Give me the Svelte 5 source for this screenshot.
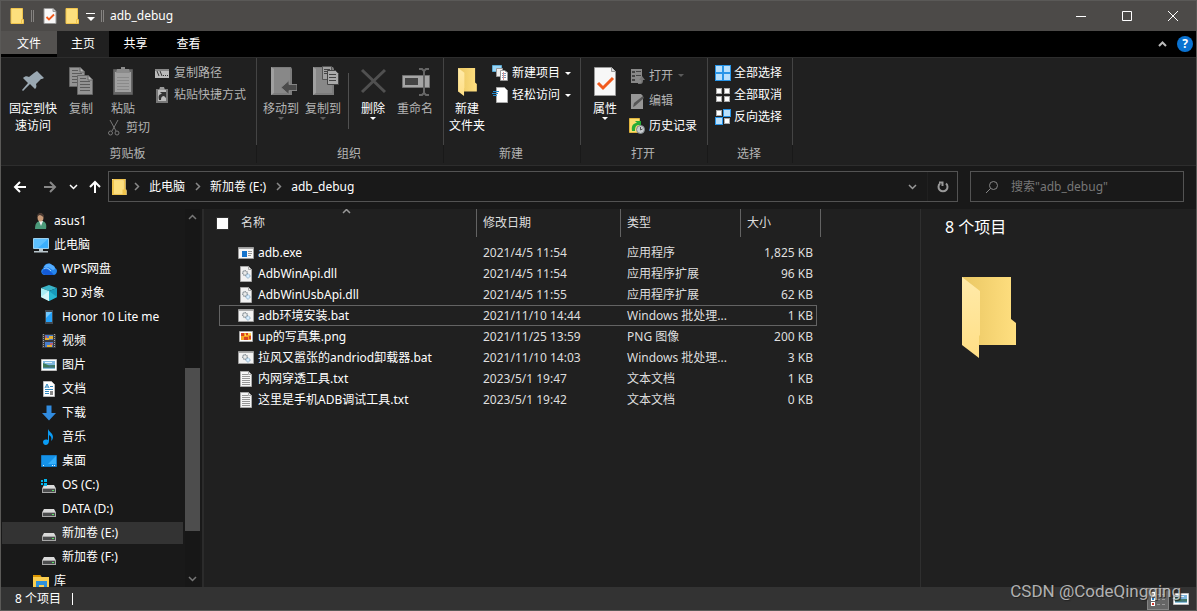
<script>
  let search = '';
  let allChecked = false;

  const tabs = ['主页', '共享', '查看'];
  const crumbs = ['此电脑', '新加卷 (E:)', 'adb_debug'];

  const tree = [
    { icon: 'user', label: 'asus1', root: true },
    { icon: 'pc', label: '此电脑', root: true },
    { icon: 'cloud', label: 'WPS网盘' },
    { icon: 'cube', label: '3D 对象' },
    { icon: 'phone', label: 'Honor 10 Lite me' },
    { icon: 'video', label: '视频' },
    { icon: 'picture', label: '图片' },
    { icon: 'doc', label: '文档' },
    { icon: 'download', label: '下载' },
    { icon: 'music', label: '音乐' },
    { icon: 'desktop', label: '桌面' },
    { icon: 'osdrive', label: 'OS (C:)' },
    { icon: 'drive', label: 'DATA (D:)' },
    { icon: 'drive', label: '新加卷 (E:)', current: true },
    { icon: 'drive', label: '新加卷 (F:)' },
    { icon: 'library', label: '库', root: true }
  ];

  const files = [
    { icon: 'exe', name: 'adb.exe', date: '2021/4/5 11:54', type: '应用程序', size: '1,825 KB' },
    { icon: 'dll', name: 'AdbWinApi.dll', date: '2021/4/5 11:54', type: '应用程序扩展', size: '96 KB' },
    { icon: 'dll', name: 'AdbWinUsbApi.dll', date: '2021/4/5 11:55', type: '应用程序扩展', size: '62 KB' },
    { icon: 'bat', name: 'adb环境安装.bat', date: '2021/11/10 14:44', type: 'Windows 批处理...', size: '1 KB', focused: true },
    { icon: 'png', name: 'up的写真集.png', date: '2021/11/25 13:59', type: 'PNG 图像', size: '200 KB' },
    { icon: 'bat', name: '拉风又嚣张的andriod卸载器.bat', date: '2021/11/10 14:03', type: 'Windows 批处理...', size: '3 KB' },
    { icon: 'txt', name: '内网穿透工具.txt', date: '2023/5/1 19:47', type: '文本文档', size: '1 KB' },
    { icon: 'txt', name: '这里是手机ADB调试工具.txt', date: '2023/5/1 19:42', type: '文本文档', size: '0 KB' }
  ];
</script>

{#snippet icon(name)}
  <svg class="icon" width="16" height="16" viewBox="0 0 16 16" aria-hidden="true">
    {#if name === 'folder'}
      <path d="M2 0.5h11.5v10.5l1 1v3.5H2z" fill="#fddf7d" />
      <path d="M2 0.5h11.5v10.5M12.5 15.5v-4h2v4H2V.5" fill="none" stroke="#f0c44c" />
    {:else if name === 'props'}
      <path d="M2 .5h9l3 3v12H2z" fill="#f8f8f8" stroke="#999" />
      <path d="M11 .5v3h3" fill="#ccc" stroke="#999" />
      <path d="M4.500 9l2.500 2.500 5-5" fill="none" stroke="#f05a1c" stroke-width="1.800" />
    {:else if name === 'user'}
      <path d="M2 16c0-5 1.500-8 6-8s6 3 5 8z" fill="#4b9a7a" />
      <path d="M6 8l2 5 2-5z" fill="#eee" />
      <ellipse cx="7.500" cy="4.500" rx="3" ry="4" fill="#c79a78" />
      <path d="M4 5c-1-7 8-6 7 0-1-2-4-3-4-3S5 2 4 5z" fill="#4a3a32" />
    {:else if name === 'pc'}
      <path d="M.5 1.500h15v10H.5z" fill="#3aaefc" stroke="#9bd0ef" />
      <path d="M1 2h14L5 11H1z" fill="#74cbff" opacity=".6" />
      <path d="M6 12h4v2H6zM1 14h14v1.500H1z" fill="#b9c6cc" />
    {:else if name === 'cloud'}
      <path d="M3 14a3.500 3.500 0 0 1-1-6.500C3 3 8 1 11 4c2 .5 3 2 3 3 3 1 2.500 6-1 7z" fill="#2586ed" />
      <path d="M3 6c2-4 6-4 8-2 2 1 3 2 3 4l-2 1-5-3z" fill="#54adff" />
      <path d="M1 12c1-5 5-6 12 2H4z" fill="#145bd7" />
      <path d="M3 8c2-2 4-1 7 2" fill="none" stroke="#bfe0ff" stroke-width=".8" />
    {:else if name === 'cube'}
      <path d="M8 0l8 3-8 3-8-3z" fill="#3ab5c9" />
      <path d="M0 3l8 3v10l-8-4z" fill="#a8eef4" />
      <path d="M16 3L8 6v10l8-4z" fill="#169bbb" />
      <path d="M0 12l8-6v10z" fill="#d5f7f8" /><path d="M8 6l8 6-8 4z" fill="#29b8d1" />
    {:else if name === 'phone'}
      <path d="M4 1h8v14H4z" fill="#414951" /><path d="M5 3h6v10H5z" fill="#25a2fa" />
      <path d="M5 3h6L5 9z" fill="#71c9ff" />
    {:else if name === 'video'}
      <path d="M1 1h14v14H1z" fill="#39393c" />
      <path d="M2.500 1v14M13.500 1v14" stroke="#a0a0a0" stroke-dasharray="1 1" />
      <path d="M4 2h8v5H4zM4 9h8v5H4z" fill="#477ccc" />
      <path d="M4 5h4v2H4zM8 3h4v3H8zM6 12h5v2H6z" fill="#e2af35" />
      <path d="M4 3h2v2H4zM9 10h3v2H9z" fill="#bb6077" />
    {:else if name === 'picture'}
      <path d="M.5 2.500h15v11H.5z" fill="#fff" stroke="#bbb" />
      <path d="M2 4h12v4H2z" fill="#7fb7df" /><path d="M2 8h12v4H2z" fill="#477b88" />
      <path d="M4 5h7v1H4z" fill="#e7f4fb" />
      <path d="M2 6l5 2 2 2H2zM8 9l6-1v2z" fill="#3e7b59" /><path d="M2 11h12v1H2z" fill="#8ec3dc" />
    {:else if name === 'doc'}
      <path d="M2.500.5h8l3 3v12h-11z" fill="#fff" stroke="#bbb" />
      <path d="M4 7l2-4 2 4M5 6h2M9 5.500h3M4 8.500h8M4 10.500h4M4 12.500h4" fill="none" stroke="#2f87bf" />
      <path d="M9 10h3v4H9z" fill="#888" />
    {:else if name === 'download'}
      <path d="M5.500.5h5V8h4.500l-7 7.500L1 8h4.500z" fill="#318ce0" />
    {:else if name === 'music'}
      <path d="M7 0c1 3 5 4 5 8 0 2-1 3-2 4 1-3 0-5-2-6v6c0 5-6 5-6 1 0-2 2-3 5-2z" fill="#0a9cf5" />
    {:else if name === 'desktop'}
      <path d="M.5 2.500h15v11H.5z" fill="#1592e8" stroke="#137bc6" />
      <path d="M15 3v8H7z" fill="#36b0fb" /><path d="M2 12.500h1M11 12.500h1M13 12.500h1" stroke="#e5f6ff" />
    {:else if name === 'osdrive' || name === 'drive'}
      <path d="M3 8h10l2 3.500H1z" fill="#dadada" />
      <path d="M1 11h14v5H1z" fill="#a7a7a7" /><path d="M2 12h12v3H2z" fill="#4b4c4d" />
      <path d="M11 13h2v1h-2z" fill="#56e363" />
      {#if name === 'osdrive'}
        <path d="M0 3h2v2H0zM3 2h3v3H3zM0 6h2v2H0zM3 6h3v3H3z" fill="#00b5ed" />
      {/if}
    {:else if name === 'library'}
      <path d="M0 2h7l1.500 2H16v12H0z" fill="#fbcf50" /><path d="M0 2h7l1.500 2H0z" fill="#da9400" />
      <path d="M3 8h11v8h-3v-4H6v4H3z" fill="#2e91db" />
    {:else if name === 'exe'}
      <path d="M.5 2.500h15v11H.5z" fill="#f7f7f7" stroke="#9b9b9b" /><path d="M1 3h14v1H1z" fill="#aaa" />
      <path d="M4 6h5v6H4z" fill="#1674cd" /><path d="M10 6.500h4M10 8.500h4M10 10.500h3" stroke="#999" />
    {:else if name === 'dll' || name === 'bat'}
      {#if name === 'dll'}
        <path d="M2.500.5h8l3 3v12h-11z" fill="#f2f2f2" stroke="#a8a8a8" /><path d="M10.500.5v3h3" fill="none" stroke="#a8a8a8" />
      {:else}
        <path d="M.5 1.500h15v12H.5z" fill="#f2f2f2" stroke="#9d9d9d" /><path d="M1 2h14v1H1z" fill="#aaa" />
      {/if}
      <circle cx="7" cy="7" r="2.500" fill="#c9cdcf" stroke="#778087" stroke-dasharray="1.500 .7" /><circle cx="7" cy="7" r="1" fill="#f5f5f5" />
      <circle cx="10" cy="10" r="2" fill="#d6edff" stroke="#82a5be" stroke-dasharray="1 .5" />
    {:else if name === 'png'}
      <path d="M1.500 2.500h13v10h-13z" fill="#fff" stroke="#aaa" />
      <path d="M3 4h10v7H3z" fill="#f6a423" /><path d="M3 4h3v3H3zM8 4h2v2H8zM6 8h4v3H6zM11 7h2v3h-2z" fill="#d64221" />
      <path d="M7 5h1v2H7zM10 4h3v2h-3z" fill="#ffd557" />
    {:else if name === 'txt'}
      <path d="M2.500.5h8l3 3v12h-11z" fill="#f6f6f6" stroke="#aaa" /><path d="M10.500.5v3h3" fill="none" stroke="#aaa" />
      <path d="M4 3.500h6M4 5.500h8M4 7.500h8M4 9.500h8M4 11.500h8M4 13.500h8" stroke="#969696" />
    {:else if name === 'copypath'}
      <path d="M1 4h14v9H1z" fill="#bbb" /><path d="M1 4h14v2H1z" fill="#888" />
      <path d="M3 6l2 5M6 6l2 5M9 10.500h1M11 10.500h1M13 10.500h1" stroke="#333" />
    {:else if name === 'shortcut'}
      <path d="M2 2h12v14H2z" fill="#777" /><path d="M4 3h8v11H4z" fill="#bcbcbc" />
      <path d="M6 0h4l1 3H5z" fill="#999" /><path d="M5 13c-1-4 0-6 3-6L6 5h6v6l-2-2c-2 0-3 1-3 4z" fill="#333" />
    {:else if name === 'cut'}
      <path d="M4 0l6 11M12 0L6 11" stroke="#777" /><circle cx="4.500" cy="13" r="2" fill="none" stroke="#777" /><circle cx="11" cy="13" r="2" fill="none" stroke="#777" />
    {:else if name === 'newitem'}
      <path d="M.5.5h9v6h-9z" fill="#9ad6f7" stroke="#5ca9d2" />
      <path d="M4.500 3.500h6v8h-6z" fill="#eee" stroke="#999" /><path d="M8.500 5.500h4l3 2v8h-7z" fill="#fff" stroke="#999" />
      <path d="M10 8.500h4M10 10.500h4M10 12.500h4" stroke="#819dba" /><path d="M11.500 7v8" stroke="#d99" />
    {:else if name === 'easy'}
      <path d="M4.500.5h8l3 3v12h-11z" fill="#fff" stroke="#aaa" /><path d="M1 4.500h6M0 6.500h6M1 8.500h4" stroke="#2489cd" />
    {:else if name === 'open'}
      <path d="M2 1h11v14H2z" fill="#888" /><path d="M3 3h3v2H3zM3 7h3v2H3zM3 11h3v2H3z" fill="#444" />
      <path d="M7 3.500h5M7 7.500h5" stroke="#444" /><path d="M9 15h2c2 0 1-3 1-3h-2l3-4 3 4h-2c0 3-1 4-3 4H9z" fill="#777" />
    {:else if name === 'edit'}
      <path d="M2 1h10l2 2v13H2z" fill="#969696" /><path d="M4 14l1-4 9-7 1 2-9 8z" fill="#555" />
    {:else if name === 'history'}
      <path d="M.5.500h10v14H.5z" fill="#f9dd6d" stroke="#dfb33d" />
      <path d="M3 13C2 7 5 5 8 5l-2-2h6v5L10 7c-3 0-4 2-4 6z" fill="#27ac38" />
      <circle cx="11.500" cy="11.500" r="4" fill="#c8ccd0" stroke="#7d8488" /><path d="M11.500 9v3l2-1" fill="none" stroke="#555" />
    {:else if name === 'selall' || name === 'selnone' || name === 'selinv'}
      {#each [[0, 0], [8, 0], [0, 8], [8, 8]] as [x, y], i}
        {#if name === 'selall' || (name === 'selinv' && (i === 1 || i === 2))}
          <rect x={x + 0.5} y={y + 0.5} width="7" height="7" fill="#b9e0fc" stroke="#2995e8" />
        {:else}
          <rect x={x + 1.5} y={y + 1.5} width="5" height="5" fill="#fff" stroke="#aaa" />
        {/if}
      {/each}
    {/if}
  </svg>
{/snippet}

{#snippet bigIcon(name)}
  <svg class="icon" width="32" height="32" viewBox="0 0 32 32" aria-hidden="true">
    {#if name === 'pin'}
      <path d="M20 5l7 7-2 1-1 0-5 5c1 3 0 4-1 5l-5-5-7 7-1-1 6-7-5-5c2-2 4-2 6-1l5-4z" fill="#9aa8b2" />
    {:else if name === 'copy'}
      {#each [[4, 1], [12, 9]] as [x, y]}
        <g transform="translate({x} {y})">
          <path d="M.5.500h11l4 4v15H.5z" fill="#949494" stroke="#666" /><path d="M11 1v4h4" fill="#bbb" stroke="#666" />
          <path d="M3 6.500h10M3 9.500h10M3 12.500h10M3 15.500h10M3 3.500h6" stroke="#5c5c5c" />
        </g>
      {/each}
    {:else if name === 'paste'}
      <path d="M6.500 3.500h19v25h-19z" fill="#666" stroke="#555" /><path d="M8 6h16v20H8z" fill="#a0a0a0" />
      <path d="M14 1h4v2h4l1 4H9l1-4h4z" fill="#8b8b8b" /><path d="M10 11.500h12M10 14.500h12M10 17.500h12M10 20.500h12M10 23.500h12" stroke="#8a8a8a" />
    {:else if name === 'move' || name === 'copyto'}
      <path d="M6 1h20l1 2v26H6z" fill="#7c7c7c" /><path d="M8 2h17v25H8z" fill="#888" /><path d="M6 1l3 2v24l-3 2z" fill="#a0a0a0" />
      {#if name === 'move'}
        <path d="M16 21.500l8-7v4h8v6h-8v4z" fill="#4b4b4b" stroke="#858585" />
      {:else}
        <path d="M15.500.5h9v13h-9z" fill="#a0a0a0" stroke="#555" /><path d="M20.500 4.500h8l3 3v11h-11z" fill="#aaa" stroke="#444" />
        <path d="M17 3.500h6M17 5.500h3M17 7.500h3M22 8.500h7M22 11.500h7M22 14.500h7" stroke="#444" />
      {/if}
    {:else if name === 'delete'}
      <path d="M5 4l23 22M28 4L5 26" stroke="#505050" stroke-width="3" />
    {:else if name === 'rename'}
      <path d="M3.500 9.500h27v12h-27z" fill="#a5a5a5" stroke="#717171" /><path d="M6 12h13v7H6z" fill="#444" />
      <path d="M20 3h3l2 2 2-2h3M25 5v22M20 29h3l2-2 2 2h3" fill="none" stroke="#666" stroke-width="2" />
    {:else if name === 'props'}
      <path d="M5.500 1.500h17l4 4v24h-21z" fill="#f7f7f7" stroke="#999" /><path d="M22.500 1.500v4h4" fill="#ddd" stroke="#999" />
      <path d="M9 17l5 5 10-10" fill="none" stroke="#f15a1d" stroke-width="3" />
    {/if}
  </svg>
{/snippet}

{#snippet folder(size)}
  <svg class="folder {size}" viewBox="0 0 54 81" aria-hidden="true">
    <defs>
      <linearGradient id="back-{size}" x1="0" y1="0" x2="1" y2="0">
        <stop offset="0" stop-color="#eac763" /><stop offset="1" stop-color="#ffdf80" />
      </linearGradient>
      <linearGradient id="flap-{size}" x1="0" y1="0" x2="0" y2="1">
        <stop offset="0" stop-color="#ffeaa9" /><stop offset="1" stop-color="#ffdf86" />
      </linearGradient>
    </defs>
    <path d="M0 0h49v42l5 4v22H0z" fill="url(#back-{size})" />
    <path d="M0 0l18 14v44l-1 1v22L0 68z" fill="url(#flap-{size})" />
  </svg>
{/snippet}

{#snippet chevron(dir)}
  <svg class="chevron {dir}" width="9" height="9" viewBox="0 0 9 9" aria-hidden="true">
    <path d="M1 3l3.500 3.500L8 3" fill="none" stroke="currentColor" stroke-width="1.500" />
  </svg>
{/snippet}

{#snippet big(name, label, state, arrow)}
  <button class="big {state}">
    {#if name === 'folder'}
      {@render folder('medium')}
    {:else}
      {@render bigIcon(name)}
    {/if}
    <span>{label}</span>
    {#if arrow}<i class="caret"></i>{/if}
  </button>
{/snippet}

{#snippet small(name, label, state, arrow)}
  <button class="small {state}">
    {@render icon(name)}
    <span>{label}</span>
    {#if arrow}<i class="caret"></i>{/if}
  </button>
{/snippet}

<div class="window">
  <header class="titlebar">
    {@render icon('folder')}
    <i class="grip"></i>
    <button class="quick" aria-label="属性">{@render icon('props')}</button>
    <button class="quick" aria-label="新建文件夹">{@render icon('folder')}</button>
    <button class="more" aria-label="自定义"><i class="caret"></i></button>
    <i class="grip"></i>
    <span class="title">adb_debug</span>
    <div class="controls">
      <button aria-label="最小化"><svg width="12" height="12"><path d="M1 6.500h10" /></svg></button>
      <button aria-label="最大化"><svg width="12" height="12"><path d="M1.500 1.500h9v9h-9z" /></svg></button>
      <button aria-label="关闭"><svg width="12" height="12"><path d="M1 1l10 10M11 1L1 11" /></svg></button>
    </div>
  </header>

  <nav class="tabs">
    <button class="file">文件</button>
    {#each tabs as tab, i}
      <button class:active={i === 0}>{tab}</button>
    {/each}
    <div class="tab-tools">
      <button class="fold" aria-label="折叠">{@render chevron('up')}</button>
      <button class="help" aria-label="帮助">?</button>
    </div>
  </nav>

  <section class="ribbon">
    <div class="group clipboard">
      <div class="tools">
        {@render big('pin', '固定到快速访问', 'wide', false)}
        {@render big('copy', '复制', 'dim', false)}
        <div class="paste">
          {@render big('paste', '粘贴', 'dim', false)}
          {@render small('cut', '剪切', 'dim', false)}
        </div>
        <div class="stack">
          {@render small('copypath', '复制路径', 'dim', false)}
          {@render small('shortcut', '粘贴快捷方式', 'dim', false)}
        </div>
      </div>
      <div class="caption">剪贴板</div>
    </div>
    <div class="group organize">
      <div class="tools">
        {@render big('move', '移动到', 'dim', true)}
        {@render big('copyto', '复制到', 'dim', true)}
        <i class="rule"></i>
        {@render big('delete', '删除', '', true)}
        {@render big('rename', '重命名', 'dim', false)}
      </div>
      <div class="caption">组织</div>
    </div>
    <div class="group create">
      <div class="tools">
        {@render big('folder', '新建 文件夹', '', false)}
        <div class="stack">
          {@render small('newitem', '新建项目', '', true)}
          {@render small('easy', '轻松访问', '', true)}
        </div>
      </div>
      <div class="caption">新建</div>
    </div>
    <div class="group open">
      <div class="tools">
        {@render big('props', '属性', '', true)}
        <div class="stack loose">
          {@render small('open', '打开', 'dim', true)}
          {@render small('edit', '编辑', 'dim', false)}
          {@render small('history', '历史记录', '', false)}
        </div>
      </div>
      <div class="caption">打开</div>
    </div>
    <div class="group select">
      <div class="tools">
        <div class="stack">
          {@render small('selall', '全部选择', '', false)}
          {@render small('selnone', '全部取消', '', false)}
          {@render small('selinv', '反向选择', '', false)}
        </div>
      </div>
      <div class="caption">选择</div>
    </div>
  </section>

  <div class="navbar">
    <div class="history">
      <button aria-label="后退"><svg width="14" height="14"><path d="M13 7H2M7 2L2 7l5 5" /></svg></button>
      <button class="off" aria-label="前进"><svg width="14" height="14"><path d="M1 7h11M7 2l5 5-5 5" /></svg></button>
      <button class="recent" aria-label="最近">{@render chevron('down')}</button>
      <button class="parent" aria-label="上移"><svg width="14" height="14"><path d="M7 13V2M2 7l5-5 5 5" /></svg></button>
    </div>
    <div class="address">
      {@render icon('folder')}
      {#each crumbs as crumb}
        <span class="sep">{@render chevron('right')}</span>
        <button class="crumb">{crumb}</button>
      {/each}
      <button class="drop" aria-label="展开">{@render chevron('down')}</button>
      <button class="refresh" aria-label="刷新">
        <svg width="12" height="12"><path d="M3 2.500a4.500 4.500 0 1 0 6 0M2 1.500h3.500V5" /></svg>
      </button>
    </div>
    <label class="search">
      <svg width="14" height="14" aria-hidden="true"><circle cx="8.500" cy="5.500" r="4" /><path d="M5.500 8.500L1 13" /></svg>
      <input type="text" aria-label="搜索" placeholder={'搜索"adb_debug"'} bind:value={search} />
    </label>
  </div>

  <main>
    <aside class="sidebar">
      <nav class="tree">
        {#each tree as item}
          <a href="#tree" class:root={item.root} class:current={item.current}>
            {@render icon(item.icon)}
            <span>{item.label}</span>
          </a>
        {/each}
      </nav>
      <div class="scrollbar">
        <button aria-label="向上滚动">{@render chevron('up')}</button>
        <i class="before"></i>
        <i class="thumb"></i>
        <i class="after"></i>
        <button aria-label="向下滚动">{@render chevron('down')}</button>
      </div>
    </aside>

    <section class="files">
      <table>
        <colgroup>
          <col class="c-name" /><col class="c-date" /><col class="c-type" /><col class="c-size" /><col class="c-end" />
        </colgroup>
        <thead>
          <tr>
            <th>
              <div class="head name">
                <input type="checkbox" aria-label="全选" bind:checked={allChecked} />
                名称
                <span class="sort">{@render chevron('up')}</span>
              </div>
            </th>
            <th><div class="head">修改日期</div></th>
            <th><div class="head">类型</div></th>
            <th colspan="2"><div class="head">大小</div></th>
          </tr>
        </thead>
        <tbody>
          {#each files as file}
            <tr class:focused={file.focused}>
              <td><div class="filename">{@render icon(file.icon)}<span>{file.name}</span></div></td>
              <td>{file.date}</td>
              <td>{file.type}</td>
              <td class="size">{file.size}</td>
              <td class="end"></td>
            </tr>
          {/each}
        </tbody>
      </table>
    </section>

    <aside class="preview">
      <h2>8 个项目</h2>
      {@render folder('large')}
    </aside>
  </main>

  <footer>
    <span class="count">8 个项目</span>
    <button class="view on" aria-label="详细信息">
      <svg width="16" height="16">
        <path d="M1 1h4v4H1zM1 6h4v4H1zM1 11h4v4H1z" fill="#fff" />
        <path d="M2 3h2" stroke="#555" /><path d="M2 8h2" stroke="#277fcd" stroke-width="2" /><path d="M2 13h2" stroke="#d43b30" stroke-width="2" />
        <path d="M7 3.500h3M12 3.500h3M7 8.500h3M12 8.500h3M7 13.500h3M12 13.500h3" stroke="#999" />
      </svg>
    </button>
    <button class="view" aria-label="大图标">{@render icon('picture')}</button>
  </footer>
  <div class="watermark">CSDN @CodeQingqing</div>
</div>

<style>
  :global(body) {
    background: #191919;
  }

  .window {
    position: relative;
    box-sizing: border-box;
    height: 100vh;
    display: flex;
    flex-direction: column;
    border: 1px solid #5a5957;
    background: #191919;
    color: #fff;
    font: 12px/18px "Noto Sans", "Noto Sans CJK SC", sans-serif;
  }

  button {
    padding: 0;
    border: 0;
    background: none;
    color: inherit;
    font: inherit;
  }

  svg {
    display: block;
    flex: none;
  }

  .up {
    transform: rotate(180deg);
  }

  .right {
    transform: rotate(-90deg);
  }

  .caret {
    width: 0;
    border: 3px solid transparent;
    border-top-color: currentColor;
    border-bottom: 0;
  }

  /* title bar */
  .titlebar {
    flex: none;
    display: flex;
    align-items: center;
    height: 30px;
    padding-left: 8px;
    background: #4c4a48;
  }

  .grip {
    width: 1px;
    height: 12px;
    margin: 0 6px;
    border: solid #858381;
    border-width: 0 1px;
  }

  .quick {
    margin-left: 2px;
  }

  .quick + .quick {
    margin-left: 6px;
  }

  .more {
    width: 9px;
    height: 8px;
    margin: 2px 0 0 6px;
    display: flex;
    justify-content: center;
    align-items: flex-end;
    border-top: 1px solid #fff;
  }

  .more .caret {
    border-width: 4px 4px 0;
  }

  .controls {
    display: flex;
    align-self: stretch;
    margin-left: auto;
  }

  .controls button {
    width: 46px;
    display: grid;
    place-items: center;
  }

  .controls path {
    fill: none;
    stroke: #fff;
  }

  /* ribbon tabs */
  .tabs {
    flex: none;
    display: flex;
    height: 26px;
    background: #000;
  }

  .tabs > button {
    width: 53px;
    height: 26px;
    line-height: 26px;
  }

  .tabs .file {
    width: 56px;
    height: 23px;
    line-height: 25px;
    background: #545250;
  }

  .tabs .active {
    width: 52px;
    background: #202020;
  }

  .tab-tools {
    margin-left: auto;
    display: flex;
    align-items: center;
    gap: 10px;
    padding-right: 3px;
    color: #bbb;
  }

  .fold path {
    stroke-width: 2px;
  }

  .help {
    width: 16px;
    height: 16px;
    border-radius: 50%;
    background: #0a72d1;
    color: #fff;
    font-weight: 700;
    line-height: 16px;
  }

  /* ribbon */
  .ribbon {
    flex: none;
    display: flex;
    height: 107px;
    border-top: 1px solid #2d2d2d;
    border-bottom: 1px solid #2d2d2d;
    background: #202020;
  }

  .group {
    box-sizing: border-box;
    display: flex;
    flex-direction: column;
  }

  .tools {
    box-sizing: border-box;
    height: 87px;
    display: flex;
    align-items: flex-start;
    padding-top: 8px;
    border-right: 1px solid #444;
  }

  .caption {
    padding-right: 2px;
    text-align: center;
    color: #b4b4b4;
    border-right: 1px solid #191919;
  }

  .clipboard {
    width: 256px;
  }

  .organize {
    width: 187px;
  }

  .create {
    width: 137px;
  }

  .open {
    width: 127px;
  }

  .select {
    width: 85px;
  }

  .clipboard .tools {
    padding-left: 5px;
  }

  .create .tools {
    padding-left: 4px;
  }

  .organize .tools,
  .open .tools {
    padding-left: 3px;
  }

  .select .tools {
    padding-left: 7px;
  }

  .big {
    width: 42px;
    display: flex;
    flex-direction: column;
    align-items: center;
    line-height: 17px;
    word-break: keep-all;
  }

  .big span {
    margin-top: 2px;
  }

  .big.wide {
    width: 54px;
    word-break: normal;
  }

  .wide span {
    width: 48px;
  }

  .create .big {
    width: 38px;
  }

  .dim {
    color: #b4b4b4;
  }

  .organize .dim .caret,
  .open .dim .caret {
    opacity: 0.4;
  }

  .paste {
    width: 49px;
  }

  .paste .small {
    padding-left: 4px;
  }

  .small {
    height: 22px;
    display: flex;
    align-items: center;
    gap: 4px;
    white-space: nowrap;
  }

  .small .caret {
    margin-left: 1px;
  }

  .stack {
    margin-top: -4px;
    padding-left: 3px;
  }

  .create .stack {
    padding-left: 6px;
  }

  .select .stack {
    padding-left: 0;
  }

  .select .small {
    gap: 3px;
  }

  .loose {
    margin-top: -3px;
  }

  .loose .small {
    height: 25px;
  }

  .rule {
    width: 1px;
    height: 56px;
    margin: 7px 3px 0 4px;
    background: #505050;
  }

  /* address bar */
  .navbar {
    flex: none;
    display: flex;
    align-items: flex-start;
    gap: 12px;
    padding: 5px 12px 7px;
    color: #fff;
  }

  .navbar svg {
    fill: none;
    stroke: currentColor;
    stroke-width: 2px;
  }

  .history {
    display: flex;
    align-items: center;
    height: 31px;
    gap: 16px;
    margin-right: -6px;
  }

  .history .off {
    color: #888;
  }

  .history .recent {
    margin-left: -4px;
  }

  .history .parent {
    margin-left: -6px;
  }

  .address {
    flex: 1;
    display: flex;
    align-items: center;
    height: 29px;
    padding-left: 2px;
    border: 1px solid #535353;
  }

  .sep {
    margin: 0 8px 0 5px;
    color: #888;
  }

  .crumb + .sep {
    margin-left: 8px;
  }

  .drop {
    margin-left: auto;
    margin-right: 10px;
    color: #999;
  }

  .refresh {
    align-self: stretch;
    width: 30px;
    display: grid;
    place-items: center;
    border-left: 1px solid #202020;
    color: #999;
  }

  .search {
    box-sizing: border-box;
    width: 214px;
    height: 31px;
    display: flex;
    align-items: center;
    gap: 12px;
    padding-left: 14px;
    border: 1px solid #535353;
    color: #888;
  }

  .search svg {
    stroke-width: 1px;
  }

  .search input {
    flex: 1;
    min-width: 0;
    padding: 0;
    border: 0;
    outline: 0;
    background: none;
    color: #fff;
    font: inherit;
  }

  .search input::placeholder {
    color: #777;
  }

  /* body */
  main {
    flex: 1;
    min-height: 0;
    display: flex;
  }

  .sidebar {
    flex: none;
    width: 201px;
    display: flex;
    border-right: 2px solid #2b2b2b;
  }

  .tree {
    flex: 1;
    padding-left: 1px;
    overflow: hidden;
  }

  .tree a {
    display: flex;
    align-items: center;
    gap: 5px;
    height: 22px;
    margin-bottom: 2px;
    padding-left: 39px;
    color: #fff;
    text-decoration: none;
    white-space: nowrap;
  }

  .tree a:first-child {
    padding-top: 1px;
  }

  .tree .root {
    padding-left: 31px;
  }

  .tree .current {
    background: #333;
  }

  .scrollbar {
    flex: none;
    width: 15px;
    margin: 0 2px;
    display: flex;
    flex-direction: column;
    align-items: stretch;
    background: #171717;
    color: #777;
  }

  .scrollbar button {
    height: 17px;
    display: grid;
    place-items: center;
  }

  .before {
    flex: 142;
  }

  .thumb {
    flex: 163;
    background: #4d4d4d;
  }

  .after {
    flex: 39;
  }

  .files {
    flex: 1;
    min-width: 0;
    padding-left: 15px;
    background: #202020;
    overflow: hidden;
  }

  table {
    width: 602px;
    table-layout: fixed;
    border-collapse: separate;
    border-spacing: 0;
    color: #dedede;
  }

  .c-name {
    width: 258px;
  }

  .c-date {
    width: 144px;
  }

  .c-type {
    width: 120px;
  }

  .c-size {
    width: 76px;
  }

  .c-end {
    width: 4px;
  }

  th {
    padding: 0 0 5px;
    font-weight: 400;
    text-align: left;
  }

  .head {
    position: relative;
    height: 28px;
    padding-left: 6px;
    border-right: 1px solid #636363;
    line-height: 28px;
  }

  .head.name {
    display: flex;
    align-items: center;
    gap: 12px;
    padding-left: 0;
    margin-left: -3px;
  }

  .head input {
    appearance: none;
    width: 13px;
    height: 13px;
    margin: 0;
    border: 1px solid #333;
    background: #fff;
  }

  .sort {
    position: absolute;
    top: -2px;
    left: 126px;
    color: #999;
  }

  td {
    box-sizing: border-box;
    height: 21px;
    padding: 0 0 0 6px;
    border: solid transparent;
    border-width: 1px 0;
    line-height: 19px;
    white-space: nowrap;
  }

  td:first-child {
    padding-left: 18px;
    border-left-width: 1px;
    color: #fff;
  }

  .focused td {
    border-color: #636363;
  }

  .filename {
    display: flex;
    align-items: center;
    gap: 4px;
  }

  .size {
    padding-right: 3px;
    border-right-width: 1px;
    text-align: right;
  }

  td.end {
    padding: 0;
    border: 0;
  }

  .preview {
    flex: none;
    width: 251px;
    padding-left: 24px;
    border-left: 1px solid #2f2f2f;
    background: #202020;
  }

  h2 {
    margin: 6px 0 0;
    font-size: 16px;
    line-height: 24px;
    font-weight: 400;
  }

  .folder.large {
    width: 54px;
    height: 81px;
    margin: 38px 17px;
  }

  .folder.medium {
    width: 19px;
    height: 28px;
    margin: 2px 0;
  }

  footer {
    flex: none;
    display: flex;
    align-items: center;
    height: 23px;
    padding: 0 7px 0 14px;
    background: #333;
  }

  .count {
    margin-right: auto;
    padding-right: 11px;
    border-right: 1px solid #fff;
    line-height: 12px;
  }

  .view {
    display: grid;
    place-items: center;
    height: 22px;
    margin-left: 4px;
  }

  .view.on {
    width: 22px;
    box-sizing: border-box;
    border: 1px solid #858585;
    background: #666;
  }

  .watermark {
    position: absolute;
    right: 15px;
    bottom: 7px;
    color: rgba(215, 215, 215, 0.8);
    font: 17px/24px Roboto, sans-serif;
    text-shadow: 1px 1px 1px #222;
    pointer-events: none;
  }
</style>
